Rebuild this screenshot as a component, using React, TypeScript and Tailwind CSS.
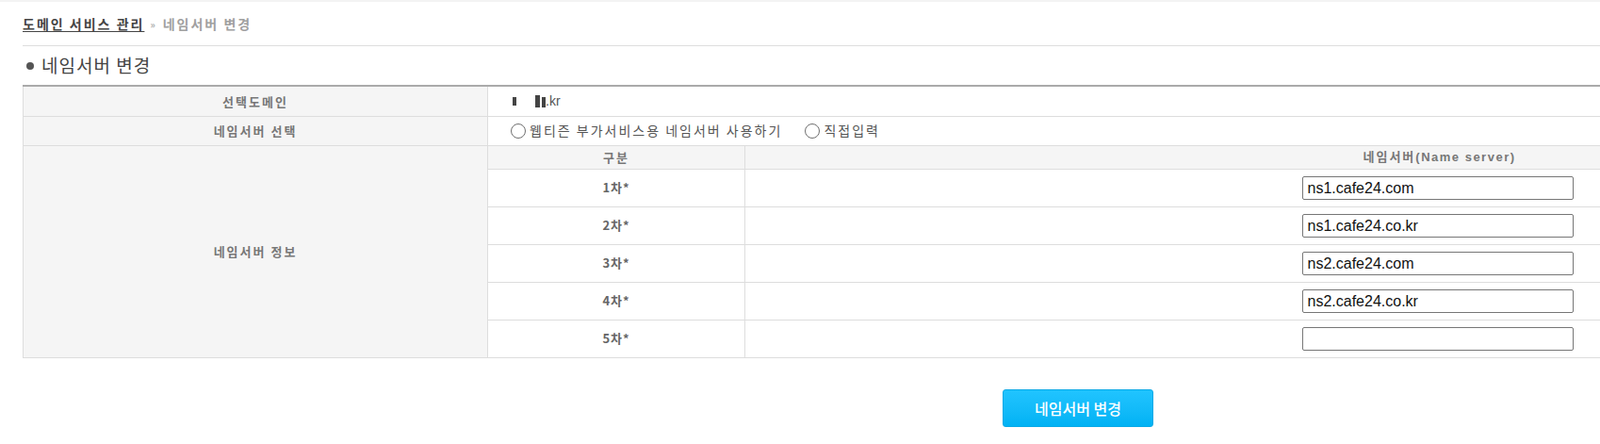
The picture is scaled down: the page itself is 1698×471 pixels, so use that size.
import { useState } from "react";

type NameServer = {
  label: string;
  value: string;
};

const initialServers: NameServer[] = [
  { label: "1차*", value: "ns1.cafe24.com" },
  { label: "2차*", value: "ns1.cafe24.co.kr" },
  { label: "3차*", value: "ns2.cafe24.com" },
  { label: "4차*", value: "ns2.cafe24.co.kr" },
  { label: "5차*", value: "" },
];

function Radio({ checked }: { checked?: boolean }) {
  return (
    <span className="inline-flex h-[16px] w-[16px] shrink-0 items-center justify-center rounded-full border-[1.5px] border-[#6f6f6f] bg-white">
      {checked && <span className="h-[8px] w-[8px] rounded-full bg-[#333]" />}
    </span>
  );
}

export default function App() {
  const [servers, setServers] = useState<NameServer[]>(initialServers);
  const [mode, setMode] = useState<"webtizen" | "manual" | null>(null);

  const labelCell =
    "border border-[#dddddd] bg-[#f5f5f5] text-center text-[13px] font-bold tracking-[2px] text-[#777]";

  return (
    <div
      className="w-full overflow-hidden border-t-2 border-[#f3f3f3] bg-white"
      style={{ fontFamily: "'Noto Sans CJK KR', 'Noto Sans', sans-serif" }}
    >
      <div className="w-[2264px] pl-[24px]">
        {/* breadcrumb */}
        <div className="flex h-[46px] items-center gap-[6px] text-[14px] font-bold tracking-[2px]">
          <a className="text-[#444] underline underline-offset-2">도메인 서비스 관리</a>
          <span className="text-[10px] text-[#aaa]">»</span>
          <span className="text-[#a0a0a0]">네임서버 변경</span>
        </div>
        <div className="border-b border-[#dddddd]" />

        {/* title */}
        <div className="flex h-[41px] items-center gap-[8px] pl-[4px]">
          <span className="h-[8px] w-[8px] rounded-full bg-[#555]" />
          <h2 className="text-[19px] tracking-[1px] text-[#444]">네임서버 변경</h2>
        </div>

        <table className="w-[2240px] table-fixed border-collapse border-t-2 border-[#aaaaaa]">
          <colgroup>
            <col className="w-[493px]" />
            <col className="w-[273px]" />
            <col className="w-[1474px]" />
          </colgroup>
          <tbody>
            <tr className="h-[32px]">
              <th className={labelCell}>선택도메인</th>
              <td colSpan={2} className="border border-[#dddddd] pl-[26px]">
                <div className="flex items-end text-[#555]">
                  <span className="mb-[3px] h-[9px] w-[4px] bg-[#444]" />
                  <span className="mb-[1px] ml-[20px] h-[13px] w-[5px] bg-[#444]" />
                  <span className="mb-[1px] ml-[2px] h-[11px] w-[4px] bg-[#444]" />
                  <span className="text-[14px] leading-[15px]" style={{ fontFamily: "'Liberation Sans', Arial, sans-serif" }}>
                    .kr
                  </span>
                </div>
              </td>
            </tr>
            <tr className="h-[31px]">
              <th className={labelCell}>네임서버 선택</th>
              <td colSpan={2} className="border border-[#dddddd] pl-[24px]">
                <div className="flex items-center text-[14px] tracking-[2px] text-[#555]">
                  <label className="flex cursor-pointer items-center gap-[4px]" onClick={() => setMode("webtizen")}>
                    <Radio checked={mode === "webtizen"} />
                    웹티즌 부가서비스용 네임서버 사용하기
                  </label>
                  <label className="ml-[24px] flex cursor-pointer items-center gap-[4px]" onClick={() => setMode("manual")}>
                    <Radio checked={mode === "manual"} />
                    직접입력
                  </label>
                </div>
              </td>
            </tr>
            <tr className="h-[25px]">
              <th rowSpan={6} className={labelCell}>
                네임서버 정보
              </th>
              <th className={labelCell}>구분</th>
              <th className={labelCell}>
                네임서버<span className="tracking-[1.5px]" style={{ fontFamily: "'Liberation Sans', Arial, sans-serif" }}>(Name server)</span>
              </th>
            </tr>
            {servers.map((s, i) => (
              <tr key={s.label} className="h-[40px]">
                <td className="border border-[#dddddd] text-center text-[13px] font-bold tracking-[1px] text-[#666]">{s.label}</td>
                <td className="border border-[#dddddd] pr-[4px] text-center">
                  <input
                    type="text"
                    value={s.value}
                    onChange={(e) =>
                      setServers((prev) => prev.map((p, j) => (j === i ? { ...p, value: e.target.value } : p)))
                    }
                    className="h-[25px] w-[288px] rounded-[2px] border border-[#767676] px-[5px] text-[16px] text-[#111] outline-none"
                    style={{ fontFamily: "'Liberation Sans', Arial, sans-serif" }}
                  />
                </td>
              </tr>
            ))}
          </tbody>
        </table>

        <div className="flex w-[2240px] justify-center pt-[33px] pb-[18px]">
          <button
            type="button"
            className="h-[40px] w-[160px] rounded-[3px] border border-[#0aa9e6] bg-gradient-to-b from-[#20c4ff] to-[#00b2f4] text-[16px] font-medium text-white"
          >
            네임서버 변경
          </button>
        </div>
      </div>
    </div>
  );
}
